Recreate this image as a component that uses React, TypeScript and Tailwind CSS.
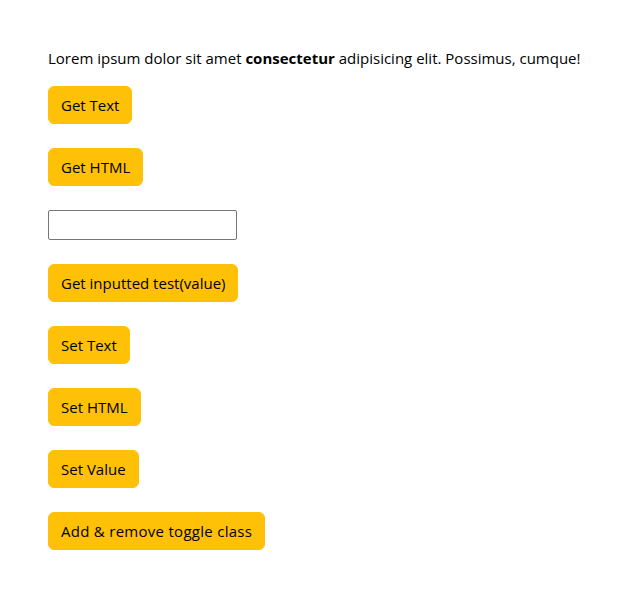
function Btn({ children, wide }: { children: React.ReactNode; wide?: boolean }) {
  return (
    <button
      type="button"
      className={
        wide
          ? "bg-[#ffc107] text-black border border-[#ffc107] rounded-[6px] px-[12px] py-[6px] text-[15px] leading-[24px] tracking-[0.28px] cursor-pointer"
          : "bg-[#ffc107] text-black border border-[#ffc107] rounded-[6px] px-[12px] py-[6px] text-[15px] leading-[24px] cursor-pointer"
      }
    >
      {children}
    </button>
  );
}

export default function App() {
  return (
    <div
      className="bg-white min-h-[612px] pl-[48px] pt-[46px] text-[#212529]"
      style={{ fontFamily: '"Open Sans", sans-serif' }}
    >
      <p className="text-[15px] leading-[24px] mb-[16px] text-black whitespace-nowrap">
        Lorem ipsum dolor sit amet <b>consectetur</b> adipisicing elit. Possimus, cumque!
      </p>
      <div className="flex flex-col items-start gap-[24px]">
        <Btn>Get Text</Btn>
        <Btn>Get HTML</Btn>
        <input
          type="text"
          className="w-[189px] h-[30px] border border-[#767676] rounded-[2px] px-[2px] text-[15px] outline-none"
        />
        <Btn>Get inputted test(value)</Btn>
        <Btn>Set Text</Btn>
        <Btn>Set HTML</Btn>
        <Btn>Set Value</Btn>
        <Btn wide>Add &amp; remove toggle class</Btn>
      </div>
    </div>
  );
}
